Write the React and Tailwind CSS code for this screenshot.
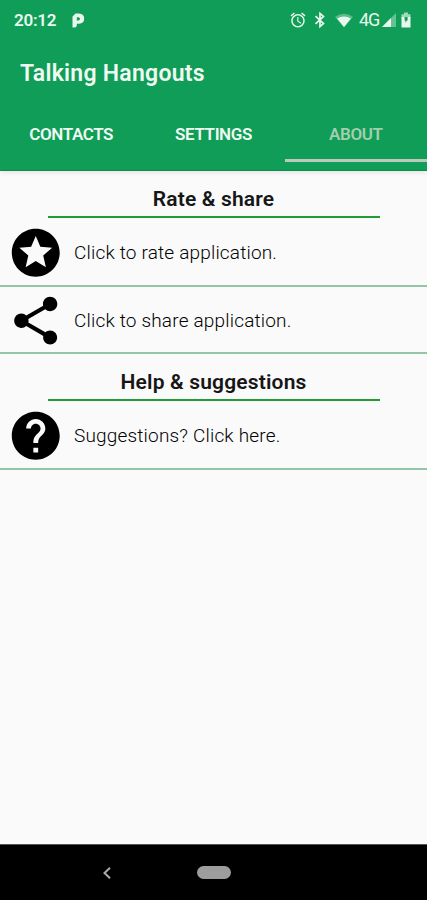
import { MdAlarm, MdHelp, MdShare, MdStars } from 'react-icons/md'

const tabs = [
  { label: 'CONTACTS', active: false },
  { label: 'SETTINGS', active: false },
  { label: 'ABOUT', active: true }
]

function StatusBar() {
  return (
    <div className="flex h-10 items-center justify-between pl-[14px] pr-[16px] text-[#e9f8ee]">
      <div className="flex items-center">
        <span className="w-[43px] whitespace-nowrap text-[17px] font-semibold leading-5 tracking-[-0.25px]">20:12</span>
        <svg className="ml-[15px] h-[15px] w-[13px]" viewBox="0 0 13 15" fill="currentColor">
          <path
            fillRule="evenodd"
            d="M0.5 3.5L3.5 0.5H7Q12.2 0.8 12.2 5.6Q12.2 10.6 7 10.8H4.8V12.4Q4.6 14.4 2.6 14.4H0.5ZM4.8 4.2V7.4H6.4Q8 7.4 8 5.8Q8 4.2 6.4 4.2Z"
          />
        </svg>
      </div>
      <div className="flex items-center">
        <MdAlarm className="size-[18px]" />
        <svg className="ml-[7px] h-[16px] w-[12px]" viewBox="0 0 12 16" fill="none" stroke="currentColor" strokeWidth="1.7">
          <path d="M1.5 4.2L9.5 11.6L6 14.6V1.4L9.5 4.4L1.5 11.8" />
        </svg>
        <svg className="ml-[8px] h-[15px] w-[20px]" viewBox="0 0 19 15" fill="currentColor">
          <path d="M0.5 4Q9.5 -2.5 18.5 4L9.5 14.5Z" opacity="0.35" />
          <path d="M2.6 5.4Q9.5 1.6 16.4 5.4L9.5 14Z" />
        </svg>
        <span className="ml-[5px] w-[21px] whitespace-nowrap text-[18px] leading-5 tracking-[-1px]">4G</span>
        <svg className="ml-[2px] h-[14px] w-[14px]" viewBox="0 0 14 14" fill="currentColor">
          <path d="M14 0V14H0Z" opacity="0.4" />
          <path d="M9 5V14H0Z" />
        </svg>
        <svg className="ml-[5px] h-[16px] w-[10px]" viewBox="0 0 10 16">
          <path d="M3 0.5H7V2.2H9.5V6H0.5V2.2H3Z" fill="currentColor" opacity="0.65" />
          <path d="M0.5 5H9.5V15.5H0.5Z" fill="currentColor" />
          <path d="M3.6 5H6.6V8.5H5.8L4.4 11V8.5H3.6Z" fill="#0f9d58" />
        </svg>
      </div>
    </div>
  )
}

function SectionTitle({ children, className }) {
  return (
    <div className={`mx-auto w-[332px] border-b-2 border-[#219c33] text-center ${className}`}>
      <h2 className="text-[21px] font-semibold leading-6 tracking-[0.17px] text-[#161616]">{children}</h2>
    </div>
  )
}

function Row({ icon: Icon, label, className }) {
  return (
    <div className={`flex items-center border-b-2 border-[#93c5a8] pl-[7px] pt-[2px] ${className}`}>
      <Icon className="size-[57.5px] shrink-0 text-black" />
      <span className="ml-[9.5px] whitespace-nowrap text-[19px] font-light leading-6 tracking-[0.18px] text-black">
        {label}
      </span>
    </div>
  )
}

export default function App() {
  return (
    <div className="flex h-[900px] w-[427px] flex-col overflow-hidden bg-[#fafafa] font-['Roboto',sans-serif]">
      <header className="h-[171px] shrink-0 border-b border-[#0c8c4c] bg-[#0f9d58] shadow-[0_1px_5px_rgba(70,0,50,0.13)]">
        <StatusBar />
        <h1 className="mt-5 pl-5 text-[23px] font-semibold leading-[27px] tracking-[0.27px] text-[#effaf2]">
          Talking Hangouts
        </h1>
        <nav className="mt-[20px] grid h-[55px] grid-cols-3">
          {tabs.map((tab) => (
            <div
              key={tab.label}
              className={`flex justify-center border-b-[3px] pt-[17px] text-[17px] font-semibold leading-5 tracking-[-0.4px] ${
                tab.active ? 'border-[#bdc9bd] text-[#a3cfae]' : 'border-transparent text-[#effaf2]'
              }`}
            >
              {tab.label}
            </div>
          ))}
        </nav>
      </header>

      <main className="flex-1">
        <SectionTitle className="h-[47px] pt-4">Rate &amp; share</SectionTitle>
        <Row className="h-[69px]" icon={MdStars} label="Click to rate application." />
        <Row className="h-[67px]" icon={MdShare} label="Click to share application." />
        <SectionTitle className="h-[47px] pt-4">Help &amp; suggestions</SectionTitle>
        <Row className="h-[69px]" icon={MdHelp} label="Suggestions? Click here." />
      </main>

      <footer className="flex h-14 shrink-0 items-center border-t border-[#555] bg-black">
        <svg className="ml-[103px] h-3 w-2" viewBox="0 0 8 12" fill="none" stroke="#aaa" strokeWidth="2">
          <path d="M7 0.8L1.5 6L7 11.2" />
        </svg>
        <div className="ml-[86px] h-[13px] w-[34px] rounded-full bg-[#9d9d9d]" />
      </footer>
    </div>
  )
}
